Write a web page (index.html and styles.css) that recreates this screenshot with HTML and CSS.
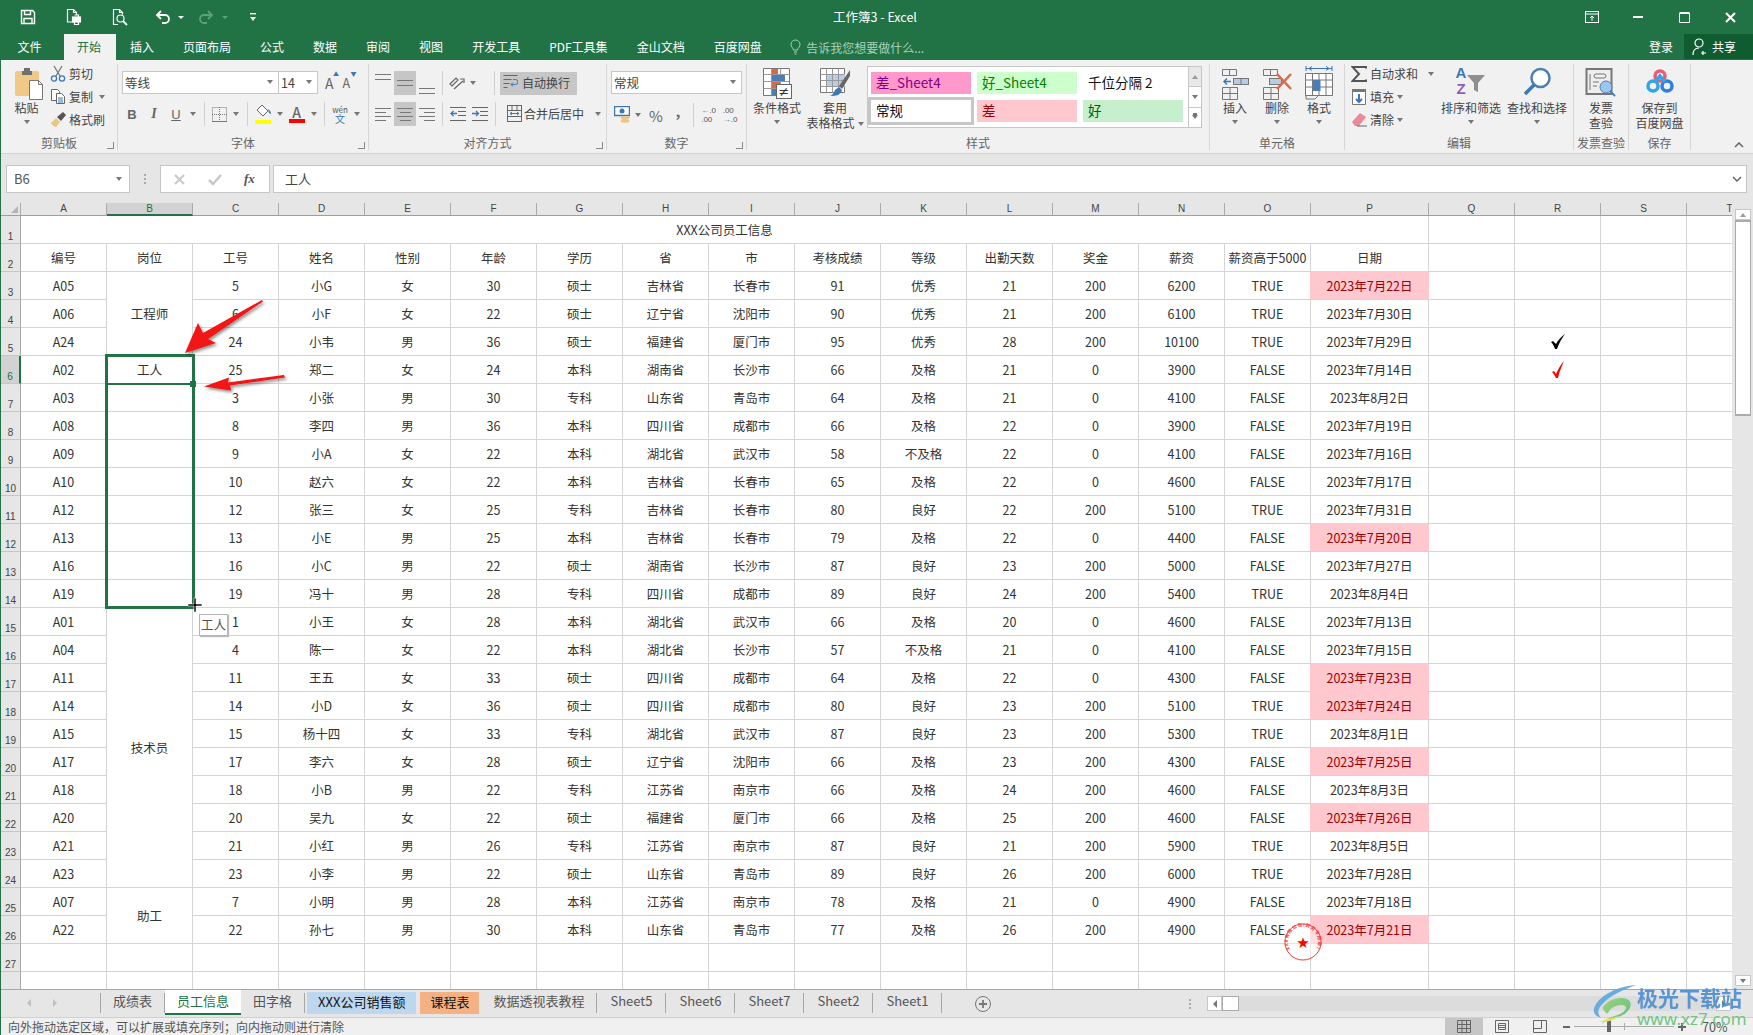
FILE: index.html
```html
<!DOCTYPE html>
<html lang="zh-CN">
<head>
<meta charset="utf-8">
<title>工作簿3 - Excel</title>
<link rel="stylesheet" href="styles.css">
</head>
<body>
<div class="app">

<header class="titlebar">
  <div class="qat">
    <svg class="qi q-save" width="16" height="16" viewBox="0 0 16 16" fill="none" stroke="#fff" stroke-width="1.4"><path d="M1.5 1.5h11l2 2v11h-13z"/><path d="M4.5 1.5v4h6v-4M4 14.5v-5h8v5"/></svg>
    <svg class="qi q-print" width="18" height="18" viewBox="0 0 18 18" fill="none" stroke="#fff" stroke-width="1.2"><path d="M8 14H2.5V1.5h6l3 3V7"/><path d="M8.5 1.5v3h3"/><rect x="7.5" y="9" width="8" height="5" fill="#fff"/><path d="M9.5 7h4v2M9.5 14v2.5h4V14" /></svg>
    <svg class="qi q-prev" width="18" height="18" viewBox="0 0 18 18" fill="none" stroke="#fff" stroke-width="1.2"><path d="M7 16.5H2.5V1.5h6l3 3v2"/><path d="M8.5 1.5v3h3"/><circle cx="9.5" cy="10.5" r="3.5"/><path d="M12 13l4 4" stroke-width="1.8"/></svg>
    <svg class="qi q-undo" width="16" height="16" viewBox="0 0 16 16" fill="none" stroke="#fff" stroke-width="1.8"><path d="M2 6h8a4 4 0 0 1 0 8H7"/><path d="M6 2L2 6l4 4"/></svg>
    <i class="qcaret"></i>
    <svg class="qi q-redo" width="16" height="16" viewBox="0 0 16 16" fill="none" stroke="#5f9f7d" stroke-width="1.8"><path d="M14 6H6a4 4 0 0 0 0 8h3"/><path d="M10 2l4 4-4 4"/></svg>
    <i class="qcaret dim"></i>
    <svg class="qi q-custom" width="8" height="10" viewBox="0 0 8 10" fill="#fff"><rect x="1" y="1" width="6" height="1.4"/><path d="M1 5h6L4 9z"/></svg>
  </div>
  <div class="doc-title">工作簿3 - Excel</div>
  <div class="winbtns">
    <svg class="wb" width="14" height="12" viewBox="0 0 14 12" fill="none" stroke="#fff"><rect x=".5" y=".5" width="13" height="11"/><path d="M.5 3h13"/><path d="M7 10V5M5 7l2-2 2 2"/></svg>
    <svg class="wb" width="10" height="2" viewBox="0 0 10 2"><rect width="10" height="2" fill="#fff"/></svg>
    <svg class="wb" width="11" height="11" viewBox="0 0 11 11" fill="none" stroke="#fff"><path d="M.5 1.5h10v9H.5z"/><path d="M.5 1h10" stroke-width="2"/></svg>
    <svg class="wb" width="11" height="11" viewBox="0 0 11 11" stroke="#fff" stroke-width="2"><path d="M1 1l9 9M10 1l-9 9"/></svg>
  </div>
</header>

<nav class="tabsbar">
  <span class="rtab">文件</span>
  <span class="rtab active">开始</span>
  <span class="rtab">插入</span>
  <span class="rtab">页面布局</span>
  <span class="rtab">公式</span>
  <span class="rtab">数据</span>
  <span class="rtab">审阅</span>
  <span class="rtab">视图</span>
  <span class="rtab">开发工具</span>
  <span class="rtab">PDF工具集</span>
  <span class="rtab">金山文档</span>
  <span class="rtab">百度网盘</span>
  <span class="tellme">
    <svg width="11" height="16" viewBox="0 0 11 16" fill="none" stroke="#a9d0b9"><path d="M3.5 11C3 8.5 1 8 1 5.5a4.5 4.5 0 0 1 9 0C10 8 8 8.5 7.5 11z"/><path d="M4 13h3M4.5 15h2"/></svg>
    告诉我您想要做什么...
  </span>
  <span class="login">登录</span>
  <span class="share">
    <svg width="16" height="18" viewBox="0 0 16 18" fill="none" stroke="#fff" stroke-width="1.2"><circle cx="7" cy="5" r="4"/><path d="M1 17c0-4 2-7 6-7M11 13v4M9 15h5"/></svg>
    共享
  </span>
</nav>

<section class="ribbon">

  <div class="group g-clip">
    <div class="gbody">
      <div class="big paste">
        <svg class="big-icon" width="32" height="34" viewBox="0 0 32 34"><rect x="1" y="5" width="24" height="25" rx="2" fill="#f0c987"/><path d="M8 5h10v4H8zM10 2h6v4h-6z" fill="#6f6f6f"/><path d="M15.5 14.5h9l4 4v15h-13z" fill="#fff" stroke="#777"/><path d="M24.5 14.5v4h4" fill="none" stroke="#777"/></svg>
        <span class="big-text">粘贴</span>
        <i class="dd"></i>
      </div>
      <div class="small-stack">
        <div class="small"><svg width="16" height="17" viewBox="0 0 16 17" fill="none"><path d="M4 1l6 10M12 1L6 11" stroke="#777" stroke-width="1.3"/><circle cx="4" cy="13.5" r="2.6" stroke="#3c78b4" stroke-width="1.3"/><circle cx="12" cy="13.5" r="2.6" stroke="#3c78b4" stroke-width="1.3"/></svg><span>剪切</span></div>
        <div class="small"><svg width="16" height="17" viewBox="0 0 16 17" fill="#fff" stroke="#666"><path d="M1.5 1.5h6l2 2v9h-8z"/><path d="M6.5 5.5h5l3 3v7h-8z"/><path d="M8 10h5M8 12h5M8 14h5" stroke="#3c78b4"/></svg><span>复制</span><i class="dd dd-copy"></i></div>
        <div class="small"><svg width="16" height="16" viewBox="0 0 16 16"><path d="M1 11l5-5 4 4-4 5c-2 0-4-2-5-4z" fill="#edc586"/><path d="M7 5l6-5 3 3-5 6z" fill="#555"/></svg><span>格式刷</span></div>
      </div>
    </div>
    <div class="glabel">剪贴板<i class="launch"></i></div>
  </div>

  <div class="group g-font">
    <div class="gbody stack">
      <div class="font-r1">
        <div class="combo c-font">等线<i class="dd"></i></div>
        <div class="combo c-size">14<i class="dd"></i></div>
        <span class="grow">A<sup>▲</sup></span>
        <span class="shrink">A<sup>▼</sup></span>
      </div>
      <div class="font-r2">
        <b class="fmt">B</b>
        <i class="fmt ital">I</i>
        <u class="fmt">U</u>
        <i class="dd"></i>
        <i class="vsep"></i>
        <svg class="ico" width="15" height="15" viewBox="0 0 15 15" fill="none" stroke="#777" stroke-dasharray="1 1"><rect x=".5" y=".5" width="14" height="14"/><path d="M7.500 0v15M0 7.500h15"/><path d="M0 14.500h15" stroke-dasharray="none"/></svg>
        <i class="dd"></i>
        <i class="vsep"></i>
        <svg class="ico" width="17" height="20" viewBox="0 0 17 20"><path d="M7 1l6 6-5 5-6-6z" fill="#fff" stroke="#666"/><path d="M13 5c2 1 3 3 3 5l-2-1z" fill="#3c78b4"/><rect x="0" y="16" width="16" height="4" fill="#ffff00"/></svg>
        <i class="dd"></i>
        <span class="fontcolor">A</span>
        <i class="dd"></i>
        <i class="vsep"></i>
        <span class="wen">wén<em>文</em></span>
        <i class="dd"></i>
      </div>
    </div>
    <div class="glabel">字体<i class="launch"></i></div>
  </div>

  <div class="group g-align">
    <div class="gbody stack">
      <div class="align-r1">
        <span class="lines at-top"><i></i><i></i><i></i></span>
        <span class="lines at-mid on"><i></i><i></i><i></i></span>
        <span class="lines at-bot"><i></i><i></i><i></i></span>
        <i class="vsep"></i>
        <svg class="ico" width="16" height="16" viewBox="0 0 16 16" fill="none" stroke="#666" stroke-width="1.2"><path d="M1 9l6-6 2 2-6 6zM5 14l9-8M11 4h4v4"/></svg>
        <i class="dd"></i>
        <i class="vsep wrap-sep"></i>
        <span class="wrap on">
          <svg width="15" height="17" viewBox="0 0 15 17" fill="none" stroke="#666"><path d="M.5 1.500h14M.5 5.500h8M.5 9.500h6M.5 13.500h4"/><path d="M10 5.500h2.500a2 2 0 0 1 0 5H8M10 8.500l-2 2 2 2" stroke="#3c78b4"/></svg>自动换行
        </span>
      </div>
      <div class="align-r2">
        <span class="lines al-left"><i></i><i></i><i></i><i></i></span>
        <span class="lines al-center on"><i></i><i></i><i></i><i></i></span>
        <span class="lines al-right"><i></i><i></i><i></i><i></i></span>
        <i class="vsep"></i>
        <svg class="ico" width="16" height="14" viewBox="0 0 16 14" fill="none" stroke="#666"><path d="M0 .5h16M8 4.500h8M8 8.500h8M0 13.500h16"/><path d="M7 6.500H1M3.500 4l-2.500 2.500L3.500 9" stroke="#3c78b4" stroke-width="1.3"/></svg>
        <svg class="ico" width="16" height="14" viewBox="0 0 16 14" fill="none" stroke="#666"><path d="M0 .5h16M8 4.500h8M8 8.500h8M0 13.500h16"/><path d="M0 6.500h6M4 4l2.500 2.500L4 9" stroke="#3c78b4" stroke-width="1.3"/></svg>
        <i class="vsep"></i>
        <span class="merge">
          <svg width="15" height="17" viewBox="0 0 15 17" fill="none" stroke="#666"><rect x=".5" y=".5" width="14" height="16"/><path d="M.5 5.500h14M.5 11.500h14M5 .5v5M10 .5v5"/><path d="M3 8.500h9M5 7l-2 1.500L5 10M10 7l2 1.500L10 10" stroke="#3c78b4"/></svg>合并后居中<i class="dd"></i>
        </span>
      </div>
    </div>
    <div class="glabel">对齐方式<i class="launch"></i></div>
  </div>

  <div class="group g-num">
    <div class="gbody stack">
      <div class="combo c-num">常规<i class="dd"></i></div>
      <div class="num-r2">
        <svg class="ico" width="16" height="18" viewBox="0 0 16 18"><rect x=".5" y=".5" width="15" height="9" fill="#fff" stroke="#3c78b4" stroke-width="1.500"/><circle cx="8" cy="5" r="2.500" fill="#3c78b4"/><ellipse cx="11" cy="12" rx="4.500" ry="1.800" fill="#edc586"/><ellipse cx="11" cy="15" rx="4.500" ry="1.800" fill="#edc586"/></svg>
        <i class="dd"></i>
        <span class="pct">%</span>
        <span class="comma">,</span>
        <i class="vsep"></i>
        <span class="dec"><em>←</em>.0<br>.00</span>
        <span class="dec">.00<br><em>→</em>.0</span>
      </div>
    </div>
    <div class="glabel">数字<i class="launch"></i></div>
  </div>

  <div class="group g-style">
    <div class="gbody">
      <div class="big b58">
        <svg class="big-icon" width="30" height="34" viewBox="0 0 30 34"><path d="M1.500 2.500h26v27h-26z" fill="#fff" stroke="#777"/><path d="M1.500 8.500h26M1.500 15.500h26M1.500 22.500h26M9.500 2.500v27M18.500 2.500v27" stroke="#999" fill="none"/><rect x="10" y="3" width="6" height="5" fill="#d9694a"/><rect x="10" y="9" width="13" height="6" fill="#4a7fb5"/><rect x="10" y="16" width="8" height="6" fill="#d9694a"/><rect x="10" y="23" width="4" height="6" fill="#4a7fb5"/><rect x="14.500" y="18.500" width="15" height="14" fill="#fff" stroke="#666"/><text x="22" y="30" class="neq">≠</text></svg>
        <span class="big-text">条件格式</span>
        <i class="dd"></i>
      </div>
      <div class="big b58">
        <svg class="big-icon" width="32" height="34" viewBox="0 0 32 34"><path d="M1.500 2.500h24v24h-24z" fill="#fff" stroke="#777"/><rect x="7" y="8" width="19" height="13" fill="#b7cde6"/><path d="M1.500 8.500h24M1.500 14.500h24M1.500 20.500h24M7.500 2.500v24M13.500 2.500v24M19.500 2.500v24" stroke="#999" fill="none"/><path d="M31 4L20 20l3 3L31 10z" fill="#666"/><path d="M20 21l3 3c-1 5-6 6-12 6 3-1 4-4 5-6z" fill="#3c78b4"/></svg>
        <span class="big-text">套用<br>表格格式<i class="dd inline"></i></span>
      </div>
      <div class="gallery">
        <div class="gal-grid">
          <span class="st s-bad4">差_Sheet4</span>
          <span class="st s-good4">好_Sheet4</span>
          <span class="st s-plain">千位分隔 2</span>
          <span class="st s-normal">常规</span>
          <span class="st s-bad">差</span>
          <span class="st s-good">好</span>
        </div>
        <div class="gal-scroll">
          <span class="gs gs1"><i class="up"></i></span>
          <span class="gs gs2"><i class="dd"></i></span>
          <span class="gs gs3"><i class="dd bar"></i></span>
        </div>
      </div>
    </div>
    <div class="glabel">样式</div>
  </div>

  <div class="group g-cells">
    <div class="gbody">
      <div class="big b42">
        <svg class="big-icon" width="28" height="34" viewBox="0 0 28 34" fill="none" stroke="#777"><path d="M1.500 3.500h14v6h-14zM8.500 3.500v6M1.500 21.500h15v12h-15zM9 21.500v12M1.500 27.500h15"/><rect x="12.500" y="12.500" width="15" height="6" fill="#b7cde6" stroke="#777"/><path d="M20 12.500v6"/><path d="M10 15.500H3M6 12.500l-3 3 3 3" stroke="#3c78b4" stroke-width="1.500"/></svg>
        <span class="big-text">插入</span><i class="dd"></i>
      </div>
      <div class="big b42">
        <svg class="big-icon" width="30" height="34" viewBox="0 0 30 34" fill="none" stroke="#777"><path d="M1.500 3.500h14v6h-14zM8.500 3.500v6M1.500 21.500h15v12h-15zM9 21.500v12M1.500 27.500h15"/><rect x="7.500" y="12.500" width="12" height="6" fill="#b7cde6"/><path d="M15 8l14 15M29 8L15 23" stroke="#d9694a" stroke-width="2.500"/></svg>
        <span class="big-text">删除</span><i class="dd"></i>
      </div>
      <div class="big b42">
        <svg class="big-icon" width="28" height="34" viewBox="0 0 28 34" fill="none" stroke="#777"><path d="M1 2.500h26M1 0v5M27 0v5M4 2.500l3-2M4 2.500l3 2M24 2.500l-3-2M24 2.500l-3 2" stroke="#3c78b4"/><path d="M.5 7.500h27v22H.5z" fill="#fff"/><path d="M.5 14h27M.5 21h27M7.500 7.500v22M14 7.500v22M21 7.500v22"/><rect x="8" y="14" width="7.500" height="11" fill="#4a7fb5" stroke="none"/><path d="M1 29v4h9l3-3" /></svg>
        <span class="big-text">格式</span><i class="dd"></i>
      </div>
    </div>
    <div class="glabel">单元格</div>
  </div>

  <div class="group g-edit">
    <div class="gbody">
      <div class="small-stack">
        <div class="small"><svg width="16" height="16" viewBox="0 0 16 16" fill="none" stroke="#555" stroke-width="2"><path d="M15 2.500V1H1.500L8 8l-6.500 7H15v-1.500"/></svg><span>自动求和</span><i class="dd dd-sum"></i></div>
        <div class="small"><svg width="16" height="17" viewBox="0 0 16 17"><path d="M1.500 1.500h13v15h-13z" fill="#fff" stroke="#777"/><rect x="1" y="1" width="14" height="3" fill="#777"/><path d="M8 6v8M5 11l3 3 3-3" fill="none" stroke="#3c78b4" stroke-width="2"/></svg><span>填充</span><i class="dd"></i></div>
        <div class="small"><svg width="16" height="15" viewBox="0 0 16 15"><path d="M1 10l8-9 6 4-7 9H4z" fill="#e88b97"/><path d="M6 14h10" stroke="#666" fill="none"/></svg><span>清除</span><i class="dd"></i></div>
      </div>
      <div class="big b66">
        <svg class="big-icon" width="32" height="34" viewBox="0 0 32 34"><text x="6" y="12" class="az a">A</text><text x="6" y="28" class="az z">Z</text><path d="M12 9h18l-7 8v9l-4-2v-7z" fill="#8f8f8f"/></svg>
        <span class="big-text">排序和筛选</span><i class="dd"></i>
      </div>
      <div class="big b66">
        <svg class="big-icon" width="30" height="34" viewBox="0 0 30 34" fill="none"><circle cx="18.500" cy="12" r="9" fill="#fff" stroke="#4a7fb5" stroke-width="2.500"/><path d="M12 19L3 28" stroke="#3c78b4" stroke-width="3.500"/></svg>
        <span class="big-text">查找和选择</span><i class="dd"></i>
      </div>
    </div>
    <div class="glabel">编辑</div>
  </div>

  <div class="group g-inv">
    <div class="gbody">
      <div class="big b55">
        <svg class="big-icon" width="32" height="34" viewBox="0 0 32 34" fill="none"><rect x="1.500" y="3" width="25" height="25" fill="#eee" stroke="#777" stroke-width="2"/><rect x="9" y="8" width="12" height="4" rx="2" stroke="#777"/><path d="M5 8v16M8 16h6M8 20h4" stroke="#777"/><circle cx="21" cy="21" r="6" fill="#9cc6ef" stroke="#4a7fb5"/><path d="M25 25l5 5" stroke="#4a7fb5" stroke-width="2"/></svg>
        <span class="big-text">发票<br>查验</span>
      </div>
    </div>
    <div class="glabel">发票查验</div>
  </div>

  <div class="group g-save">
    <div class="gbody">
      <div class="big b62">
        <svg class="big-icon" width="30" height="34" viewBox="0 0 30 34" fill="none" stroke-width="3.500"><circle cx="8" cy="20" r="5" stroke="#2fa6e8"/><circle cx="22" cy="20" r="5" stroke="#2f7fe0"/><circle cx="15" cy="10" r="5" stroke="#ef5a6f"/><path d="M10 16l5-6 5 6" stroke="#2fa6e8"/></svg>
        <span class="big-text">保存到<br>百度网盘</span>
      </div>
    </div>
    <div class="glabel">保存</div>
  </div>

  <svg class="collapse" width="10" height="6" viewBox="0 0 10 6" fill="none" stroke="#666" stroke-width="1.500"><path d="M1 5l4-4 4 4"/></svg>
</section>

<section class="formula">
  <div class="namebox">B6<i class="dd"></i></div>
  <span class="grip"></span>
  <div class="fxbox">
    <svg width="13" height="13" viewBox="0 0 13 13" stroke="#c8c8c8" stroke-width="2"><path d="M2 2l9 9M11 2l-9 9"/></svg>
    <svg width="14" height="13" viewBox="0 0 14 13" fill="none" stroke="#c8c8c8" stroke-width="2.500"><path d="M1 7l4 4 8-9"/></svg>
    <span class="fx">fx</span>
  </div>
  <div class="fxinput">工人<svg class="fxchev" width="10" height="6" viewBox="0 0 10 6" fill="none" stroke="#666" stroke-width="1.500"><path d="M1 1l4 4 4-4"/></svg></div>
</section>

<section class="sheet">
  <div class="canvas">
    <table class="grid">
      <colgroup><col class="c-h"><col class="c-n"><col class="c-n"><col class="c-n"><col class="c-n"><col class="c-n"><col class="c-n"><col class="c-n"><col class="c-n"><col class="c-n"><col class="c-n"><col class="c-n"><col class="c-n"><col class="c-n"><col class="c-n"><col class="c-n"><col class="c-p"><col class="c-n"><col class="c-n"><col class="c-n"><col class="c-n"></colgroup>
      <thead><tr><th class="corner"><i></i></th><th>A</th><th class="sel-h">B</th><th>C</th><th>D</th><th>E</th><th>F</th><th>G</th><th>H</th><th>I</th><th>J</th><th>K</th><th>L</th><th>M</th><th>N</th><th>O</th><th>P</th><th>Q</th><th>R</th><th>S</th><th>T</th></tr></thead>
      <tbody>
<tr><th>1<td colspan="16">XXX公司员工信息<td><td><td><td>
<tr><th>2<td>编号<td>岗位<td>工号<td>姓名<td>性别<td>年龄<td>学历<td>省<td>市<td>考核成绩<td>等级<td>出勤天数<td>奖金<td>薪资<td>薪资高于5000<td>日期<td><td><td><td>
<tr><th>3<td>A05<td rowspan="3">工程师<td>5<td>小G<td>女<td>30<td>硕士<td>吉林省<td>长春市<td>91<td>优秀<td>21<td>200<td>6200<td>TRUE<td class="pink">2023年7月22日<td><td><td><td>
<tr><th>4<td>A06<td>6<td>小F<td>女<td>22<td>硕士<td>辽宁省<td>沈阳市<td>90<td>优秀<td>21<td>200<td>6100<td>TRUE<td>2023年7月30日<td><td><td><td>
<tr><th>5<td>A24<td>24<td>小韦<td>男<td>36<td>硕士<td>福建省<td>厦门市<td>95<td>优秀<td>28<td>200<td>10100<td>TRUE<td>2023年7月29日<td><td><svg class="tick" width="16" height="15" viewBox="0 0 16 15"><path d="M1 8l2-1 3 3C8 6 11 3 15 0c-3 4-6 9-8 15H5C4 12 3 10 1 8z" fill="#000"/></svg><td><td>
<tr><th class="sel-r">6<td>A02<td>工人<td>25<td>郑二<td>女<td>24<td>本科<td>湖南省<td>长沙市<td>66<td>及格<td>21<td>0<td>3900<td>FALSE<td>2023年7月14日<td><td><svg class="tick" width="12" height="17" viewBox="0 0 12 17"><path d="M0 11l2-1 2 3c2-4 4-9 8-13-2 5-5 11-6 17H4C3 15 2 13 0 11z" fill="#f00"/></svg><td><td>
<tr><th>7<td>A03<td><td>3<td>小张<td>男<td>30<td>专科<td>山东省<td>青岛市<td>64<td>及格<td>21<td>0<td>4100<td>FALSE<td>2023年8月2日<td><td><td><td>
<tr><th>8<td>A08<td><td>8<td>李四<td>男<td>36<td>本科<td>四川省<td>成都市<td>66<td>及格<td>22<td>0<td>3900<td>FALSE<td>2023年7月19日<td><td><td><td>
<tr><th>9<td>A09<td><td>9<td>小A<td>女<td>22<td>本科<td>湖北省<td>武汉市<td>58<td>不及格<td>22<td>0<td>4100<td>FALSE<td>2023年7月16日<td><td><td><td>
<tr><th>10<td>A10<td><td>10<td>赵六<td>女<td>22<td>本科<td>吉林省<td>长春市<td>65<td>及格<td>22<td>0<td>4600<td>FALSE<td>2023年7月17日<td><td><td><td>
<tr><th>11<td>A12<td><td>12<td>张三<td>女<td>25<td>专科<td>吉林省<td>长春市<td>80<td>良好<td>22<td>200<td>5100<td>TRUE<td>2023年7月31日<td><td><td><td>
<tr><th>12<td>A13<td><td>13<td>小E<td>男<td>25<td>本科<td>吉林省<td>长春市<td>79<td>及格<td>22<td>0<td>4400<td>FALSE<td class="pink">2023年7月20日<td><td><td><td>
<tr><th>13<td>A16<td><td>16<td>小C<td>男<td>22<td>硕士<td>湖南省<td>长沙市<td>87<td>良好<td>23<td>200<td>5000<td>FALSE<td>2023年7月27日<td><td><td><td>
<tr><th>14<td>A19<td><td>19<td>冯十<td>男<td>28<td>专科<td>四川省<td>成都市<td>89<td>良好<td>24<td>200<td>5400<td>TRUE<td>2023年8月4日<td><td><td><td>
<tr><th>15<td>A01<td rowspan="10">技术员<td>1<td>小王<td>女<td>28<td>本科<td>湖北省<td>武汉市<td>66<td>及格<td>20<td>0<td>4600<td>FALSE<td>2023年7月13日<td><td><td><td>
<tr><th>16<td>A04<td>4<td>陈一<td>女<td>22<td>本科<td>湖北省<td>长沙市<td>57<td>不及格<td>21<td>0<td>4100<td>FALSE<td>2023年7月15日<td><td><td><td>
<tr><th>17<td>A11<td>11<td>王五<td>女<td>33<td>硕士<td>四川省<td>成都市<td>64<td>及格<td>22<td>0<td>4300<td>FALSE<td class="pink">2023年7月23日<td><td><td><td>
<tr><th>18<td>A14<td>14<td>小D<td>女<td>36<td>硕士<td>四川省<td>成都市<td>80<td>良好<td>23<td>200<td>5100<td>TRUE<td class="pink">2023年7月24日<td><td><td><td>
<tr><th>19<td>A15<td>15<td>杨十四<td>女<td>33<td>专科<td>湖北省<td>武汉市<td>87<td>良好<td>23<td>200<td>5300<td>TRUE<td>2023年8月1日<td><td><td><td>
<tr><th>20<td>A17<td>17<td>李六<td>女<td>28<td>硕士<td>辽宁省<td>沈阳市<td>66<td>及格<td>23<td>200<td>4300<td>FALSE<td class="pink">2023年7月25日<td><td><td><td>
<tr><th>21<td>A18<td>18<td>小B<td>男<td>22<td>专科<td>江苏省<td>南京市<td>66<td>及格<td>24<td>200<td>4600<td>FALSE<td>2023年8月3日<td><td><td><td>
<tr><th>22<td>A20<td>20<td>吴九<td>女<td>22<td>硕士<td>福建省<td>厦门市<td>66<td>及格<td>25<td>200<td>4600<td>FALSE<td class="pink">2023年7月26日<td><td><td><td>
<tr><th>23<td>A21<td>21<td>小红<td>男<td>26<td>专科<td>江苏省<td>南京市<td>87<td>良好<td>21<td>200<td>5900<td>TRUE<td>2023年8月5日<td><td><td><td>
<tr><th>24<td>A23<td>23<td>小李<td>男<td>22<td>硕士<td>山东省<td>青岛市<td>89<td>良好<td>26<td>200<td>6000<td>TRUE<td>2023年7月28日<td><td><td><td>
<tr><th>25<td>A07<td rowspan="2">助工<td>7<td>小明<td>男<td>28<td>本科<td>江苏省<td>南京市<td>78<td>及格<td>21<td>0<td>4900<td>FALSE<td>2023年7月18日<td><td><td><td>
<tr><th>26<td>A22<td>22<td>孙七<td>男<td>30<td>本科<td>山东省<td>青岛市<td>77<td>及格<td>26<td>200<td>4900<td>FALSE<td class="pink">2023年7月21日<td><td><td><td>
<tr><th>27<td><td><td><td><td><td><td><td><td><td><td><td><td><td><td><td><td><td><td><td>
<tr><th><td><td><td><td><td><td><td><td><td><td><td><td><td><td><td><td><td><td><td><td>
      </tbody>
    </table>
    <div class="sel-range"></div>
    <div class="sel-active"></div>
    <div class="sel-handle"></div>
    <div class="fill-tip">工人</div>
    <svg class="overlay" width="300" height="440" viewBox="0 0 300 440">
      <defs><filter id="sh" x="-20%" y="-20%" width="150%" height="150%"><feDropShadow dx="1.500" dy="2" stdDeviation="1.500" flood-color="#000" flood-opacity=".45"/></filter></defs>
      <path d="M261 97l1 1.500L207 136l8 4-31 10 13-30 5 10z" fill="#f21212" filter="url(#sh)"/>
      <path d="M283 172l1 2.500-55 8 1 5-27-4 25-9-1 5z" fill="#f21212" filter="url(#sh)"/>
      <path d="M187 401h6v-6h2v6h6v2h-6v6h-2v-6h-6z" fill="#000" stroke="#fff" stroke-width=".6"/>
    </svg>
    <svg class="stamp" width="40" height="40" viewBox="0 0 40 40">
      <defs><path id="ring" d="M7 27a15 15 0 1 1 26 0"/></defs>
      <circle cx="20" cy="20" r="18" fill="rgba(255,255,255,.4)" stroke="#f23b3b" stroke-width="1"/>
      <text class="stamp-text" textLength="61" lengthAdjust="spacing"><textPath href="#ring">XXX有限公司(财务专用章)</textPath></text>
      <text x="20" y="26" class="stamp-star">★</text>
    </svg>
  </div>
  <aside class="vscroll">
    <span class="vbtn"><i class="up"></i></span>
    <span class="vthumb"></span>
    <span class="vbtn vdown"><i class="dd"></i></span>
  </aside>
</section>

<section class="sheettabs">
  <div class="tabnav"><i class="navl"></i><i class="navr"></i></div>
  <span class="stab">成绩表</span>
  <span class="stab active">员工信息</span>
  <span class="stab">田字格</span>
  <span class="stab blue">XXX公司销售额</span>
  <span class="stab orange">课程表</span>
  <span class="stab">数据透视表教程</span>
  <span class="stab sn">Sheet5</span>
  <span class="stab sn">Sheet6</span>
  <span class="stab sn">Sheet7</span>
  <span class="stab sn">Sheet2</span>
  <span class="stab sn">Sheet1</span>
  <svg class="addsheet" width="16" height="16" viewBox="0 0 16 16" fill="none" stroke="#777"><circle cx="8" cy="8" r="7.500"/><path d="M8 4v8M4 8h8" stroke-width="1.800"/></svg>
  <span class="grip tabgrip"></span>
  <div class="hscroll">
    <span class="hbtn"><i class="navl dark"></i></span>
    <span class="hthumb"></span>
    <span class="htrack"></span>
    <span class="hbtn"><i class="navr dark"></i></span>
  </div>
</section>

<footer class="status">
  <span class="status-text">向外拖动选定区域，可以扩展或填充序列；向内拖动则进行清除</span>
  <span class="view on"><svg width="14" height="13" viewBox="0 0 14 13" fill="none" stroke="#666"><path d="M.5.500h13v12H.5zM.5 4.500h13M.5 8.500h13M5 .5v12M9.500.500v12"/></svg></span>
  <span class="view"><svg width="14" height="13" viewBox="0 0 14 13" fill="none" stroke="#666"><path d="M.5.500h13v12H.5z"/><path d="M3.500 3.500h7v6h-7zM3.500 5.500h7M3.500 7.500h7"/></svg></span>
  <span class="view"><svg width="14" height="13" viewBox="0 0 14 13" fill="none" stroke="#666"><path d="M.5.500h13v12H.5zM.5 8.500h8M8.500.5v8"/></svg></span>
  <i class="zminus"></i>
  <span class="zslider"><i class="ztick"></i><i class="zthumb"></i></span>
  <i class="zplus"></i>
  <span class="zoomval">70%</span>
</footer>

<div class="watermark">
  <svg class="wm-logo" width="44" height="41" viewBox="0 0 46 41">
    <defs><linearGradient id="wg" x1="0" y1="0" x2="1" y2="1"><stop offset="0" stop-color="#9fd27c"/><stop offset="1" stop-color="#4fbf72"/></linearGradient></defs>
    <path d="M45 0C28 1 9 9 2 22c-3 6 0 11 6 12-4-4-3-10 3-15C19 10 32 5 45 0z" fill="#5aa6e0" opacity=".9"/>
    <path d="M10 24c4-8 17-13 26-9 6 3 4 12-6 17-8 4-15 4-21 9 5-8 17-8 23-13 4-4 3-7-2-7-6 0-12 3-14 8-1 2-4 0-6-5z" fill="url(#wg)" opacity=".95"/>
    <path d="M6 39c8-4 16-4 22-7-5 5-13 7-22 7z" fill="#f0e060"/>
  </svg>
  <div class="wm-text"><b>极光下载站</b><span>www.xz7.com</span></div>
</div>

</div>
</body>
</html>
```
FILE: styles.css
```css
* { box-sizing: border-box; }
html, body { margin: 0; height: 100%; overflow: hidden; }
body { font-family: "Noto Sans CJK SC", "Noto Sans", sans-serif; font-size: 12px; color: #444; }
i, em { font-style: normal; }

.app { position: relative; height: 1035px; width: 1753px; border-left: 1px solid #217346; display: flex; flex-direction: column; overflow: hidden; background: #e6e6e6; }

/* carets */
.dd { display: inline-block; width: 0; height: 0; border-left: 3px solid transparent; border-right: 3px solid transparent; border-top: 4px solid #777; }

/* title bar */
.titlebar { height: 34px; background: #217346; margin-left: -1px; display: flex; align-items: center; position: relative; color: #fff; flex: none; }
.qat { display: flex; align-items: center; padding-left: 20px; }
.q-print { margin-left: 29px; }
.q-prev { margin-left: 28px; }
.q-undo { margin-left: 26px; }
.qcaret { width: 0; height: 0; border-left: 3px solid transparent; border-right: 3px solid transparent; border-top: 3px solid #fff; margin-left: 7px; }
.qcaret.dim { border-top-color: #5f9f7d; }
.q-redo { margin-left: 14px; }
.qcaret.dim { margin-left: 8px; }
.q-custom { margin-left: 21px; }
.doc-title { position: absolute; left: 833px; top: 8px; font-size: 12.5px; line-height: 18px; }
.winbtns { margin-left: auto; width: 184px; display: grid; grid-template-columns: 46px 46px 47px 45px; justify-items: center; align-items: center; padding-right: 0; }

/* ribbon tabs */
.tabsbar { height: 26px; background: #217346; margin-left: -1px; display: flex; align-items: stretch; padding-left: 3px; color: #fff; flex: none; }
.rtab { padding: 0 14.5px; line-height: 25px; font-size: 12px; white-space: nowrap; }
.rtab.active { background: #f1f1f1; color: #217346; padding: 0 14.5px 0 13px; margin-left: 8px; }
.tellme { display: flex; align-items: center; gap: 5px; color: #a9d0b9; margin-left: 14px; font-size: 12px; }
.login { margin-left: auto; line-height: 26px; margin-right: 11px; }
.share { width: 69px; background: #0f5c30; display: flex; align-items: center; gap: 4px; padding-left: 8px; height: 25px; }

/* ribbon */
.ribbon { height: 94px; background: #f1f1f1; display: flex; position: relative; border-bottom: 1px solid #d2d2d2; flex: none; }
.group { height: 86px; margin-top: 4px; border-right: 1px solid #d6d6d6; display: flex; flex-direction: column; position: relative; flex: none; }
.gbody { height: 70px; display: flex; }
.gbody.stack { flex-direction: column; }
.glabel { height: 16px; line-height: 18px; text-align: center; color: #666; font-size: 12px; white-space: nowrap; }
.launch { position: absolute; right: 3px; bottom: 1px; width: 7px; height: 7px; border-left: 1px solid #888; border-bottom: 1px solid #888; transform: scaleX(-1); }
.g-clip { width: 117px; } .g-font { width: 251px; } .g-align { width: 238px; } .g-num { width: 140px; } .g-style { width: 463px; }
.g-cells { width: 135px; } .g-edit { width: 229px; } .g-inv { width: 55px; } .g-save { width: 62px; }

.big { display: flex; flex-direction: column; align-items: center; padding-top: 2px; flex: none; }
.big-icon { height: 34px; flex: none; }
.big-text { line-height: 15px; white-space: nowrap; text-align: center; }
.big > .dd { margin-top: 5px; }
.dd.inline { margin-left: 3px; vertical-align: 2px; }
.paste { width: 49px; padding-left: 2px; }
.paste .big-icon { margin-left: 6px; }
.b58 { width: 58px; } .b42 { width: 42px; } .b66 { width: 66px; } .b55 { width: 54px; } .b62 { width: 61px; }
.small-stack { margin-top: -2px; display: flex; flex-direction: column; }
.small { height: 23px; display: flex; align-items: center; gap: 3px; white-space: nowrap; }
.dd-copy { margin-left: 3px; }
.dd-sum { margin-left: 7px; }

.combo { height: 23px; background: #fff; border: 1px solid #c6c6c6; display: flex; align-items: center; justify-content: space-between; padding: 0 5px 1px 2px; font-size: 12.5px; }
.vsep { width: 1px; height: 24px; background: #d0d0d0; justify-self: center; }
.ico { justify-self: center; align-self: center; }

/* font */
.g-font .stack { padding: 7px 0 0 4px; }
.font-r1 { display: flex; align-items: center; }
.c-font { width: 157px; }
.c-size { width: 40px; margin-left: -1px; }
.grow, .shrink { color: #666; position: relative; font-size: 14px; line-height: 20px; }
.grow { margin-left: 7px; }
.shrink { margin-left: 9px; font-size: 12.5px; }
.grow sup, .shrink sup { position: absolute; left: 8px; top: -3px; font-size: 6px; color: #3c78b4; line-height: 8px; }
.font-r2 { display: grid; grid-template-columns: 22px 22px 22px 12px 10px 20px 13px 10px 22px 11px 23px 11px 10px 22px 11px; margin: 8px 0 0 -1px; height: 24px; align-items: center; justify-items: center; }
.fmt { font-size: 13px; color: #666; font-family: "Liberation Sans", sans-serif; }
.ital { font-style: italic; font-family: "Liberation Serif", serif; font-weight: 700; font-size: 14px; }
.fontcolor { font-size: 14px; line-height: 14px; font-weight: 500; color: #666; border-bottom: 4px solid #f00; width: 16px; text-align: center; }
.wen { font-size: 8px; line-height: 9px; text-align: center; color: #555; }
.wen em { display: block; color: #3c78b4; font-size: 10px; line-height: 10px; }

/* alignment */
.g-align .stack { padding: 7px 0 0 3px; }
.align-r1 { display: grid; grid-template-columns: 22px 22px 22px 8px 22px 10px 22px 77px; height: 23px; align-items: center; justify-items: center; }
.align-r2 { display: grid; grid-template-columns: 22px 22px 22px 9px 22px 22px 9px auto; height: 23px; margin-top: 8px; align-items: center; justify-items: center; }
.wrap-sep { justify-self: end; margin-right: 5px; }
.lines { display: flex; flex-direction: column; gap: 4px; height: 100%; width: 22px; padding: 2px 3px; }
.lines i { display: block; height: 1px; background: #777; }
.at-top { justify-content: flex-start; padding-top: 3px; }
.at-mid { justify-content: center; }
.at-bot { justify-content: flex-end; padding-bottom: 1px; }
.at-top i:nth-child(3), .at-mid i:nth-child(3), .at-bot i:nth-child(3) { display: none; }
.lines.al-left, .lines.al-center, .lines.al-right { justify-content: center; gap: 3px; }
.al-left i:nth-child(even) { width: 11px; }
.al-center i:nth-child(even) { width: 11px; align-self: center; }
.al-right i:nth-child(even) { width: 11px; align-self: flex-end; }
.on { background: #c6c6c6; }
.wrap { display: flex; align-items: center; gap: 4px; width: 77px; height: 23px; padding: 0 0 1px 3px; white-space: nowrap; }
.merge { display: flex; align-items: center; gap: 2px; padding: 0 0 1px 2px; white-space: nowrap; }
.merge .dd { margin-left: 9px; }

/* number */
.g-num .stack { padding: 7px 0 0 4px; }
.c-num { width: 131px; }
.num-r2 { display: grid; grid-template-columns: 20px 12px 24px 20px 10px 21px 22px; margin: 9px 0 0 1px; height: 24px; align-items: center; justify-items: center; }
.pct { font-size: 15px; color: #666; }
.comma { font-size: 14px; font-weight: 700; color: #666; line-height: 12px; margin-bottom: 8px; }
.dec { font-size: 8px; line-height: 9px; color: #555; font-family: "Liberation Sans", sans-serif; white-space: nowrap; }
.dec em { color: #3c78b4; font-weight: 700; }

/* styles */
.g-style .gbody { padding-top: 0; }
.g-style .b58:first-child { margin-left: 1px; }
.neq { font-size: 13px; fill: #333; text-anchor: middle; font-family: "DejaVu Sans", sans-serif; }
.gallery { margin: 2px 0 0 3px; width: 335px; height: 62px; background: #fff; border: 1px solid #c6c6c6; display: flex; justify-content: space-between; }
.gal-grid { display: grid; grid-template-columns: repeat(3, 100px); grid-template-rows: 22px 22px; gap: 6px; padding: 5px 0 0 3px; }
.st { font-size: 13.5px; line-height: 20px; padding-left: 5px; white-space: nowrap; }
.s-bad4 { background: #ff99cc; color: #800080; }
.s-good4 { background: #ccffcc; color: #008000; }
.s-plain { color: #111; }
.s-normal { color: #111; box-shadow: 0 0 0 3px #c6c6c6; }
.s-bad { background: #ffc7ce; color: #9c0006; }
.s-good { background: #c6efce; color: #006100; }
.gal-scroll { width: 13px; display: flex; flex-direction: column; border-left: 1px solid #c6c6c6; }
.gs { flex: 1; display: flex; align-items: center; justify-content: center; }
.gs + .gs { border-top: 1px solid #c6c6c6; }
.gs1 { background: #e8e8e8; }
.up { display: inline-block; width: 0; height: 0; border-left: 3px solid transparent; border-right: 3px solid transparent; border-bottom: 4px solid #9a9a9a; }
.dd.bar { box-shadow: 0 -3px 0 -1px #777; }

.g-cells .gbody { padding-left: 4px; }
.g-edit .gbody { padding-left: 6px; }
.g-edit .small-stack { width: 87px; }
.az { font-size: 15px; font-weight: 700; font-family: "Liberation Sans", sans-serif; text-anchor: middle; }
.az.a { fill: #3c78b4; }
.az.z { fill: #8e5fb5; }
.collapse { position: absolute; right: 9px; bottom: 5px; }

/* formula bar */
.formula { height: 49px; background: #e6e6e6; display: flex; align-items: flex-start; padding: 11px 6px 0 5px; flex: none; }
.namebox { width: 124px; height: 28px; background: #fff; border: 1px solid #c6c6c6; display: flex; align-items: center; justify-content: space-between; padding: 0 7px 1px; font-size: 13px; color: #555; }
.grip { width: 30px; height: 12px; margin-top: 8px; background: radial-gradient(circle, #aaa 1px, transparent 1.4px) center top / 2px 4px repeat-y; flex: none; }
.fxbox { width: 110px; height: 28px; background: #fff; border: 1px solid #c6c6c6; display: flex; align-items: center; gap: 22px; padding-left: 12px; }
.fx { font-family: "Liberation Serif", serif; font-style: italic; font-weight: 700; font-size: 13px; color: #555; }
.fxinput { flex: 1; margin-left: 3px; height: 28px; background: #fff; border: 1px solid #c6c6c6; display: flex; align-items: center; justify-content: space-between; padding: 0 4px 1px 11px; font-size: 13px; color: #444; }

/* sheet */
.sheet { height: 786px; display: flex; flex: none; overflow: hidden; }
.canvas { width: 1731px; height: 786px; position: relative; overflow: hidden; background: #fff; flex: none; }
.grid { border-collapse: separate; border-spacing: 0; table-layout: fixed; width: 1772px; font-size: 12.5px; color: #333; }
.c-h { width: 20px; } .c-n { width: 86px; } .c-p { width: 118px; }
.grid td { height: 28px; padding: 0; text-align: center; vertical-align: middle; line-height: 14px; white-space: nowrap; overflow: hidden; border-right: 1px solid #d4d4d4; border-bottom: 1px solid #d4d4d4; background: #fff; }
.grid thead th { height: 13px; padding: 0; background: #e6e6e6; font: 400 10px/12px "Liberation Sans", sans-serif; color: #444; border-right: 1px solid #ababab; border-bottom: 1px solid #9e9e9e; overflow: hidden; }
.grid thead .sel-h { background: #d2d2d2; color: #217346; border-bottom: 2px solid #217346; line-height: 11px; }
.corner { position: relative; }
.corner i { position: absolute; right: 2px; bottom: 2px; width: 0; height: 0; border-left: 7px solid transparent; border-bottom: 7px solid #b4b4b4; }
.grid tbody th { padding: 0 0 1px; background: #e6e6e6; vertical-align: bottom; font: 400 10px/11px "Liberation Sans", sans-serif; color: #444; border-right: 1px solid #a8a8a8; border-bottom: 1px solid #c6c6c6; text-align: center; }
.grid tbody .sel-r { background: #d2d2d2; color: #217346; border-right: 2px solid #217346; }
.grid td.pink { background: #ffc7ce; color: #9c0006; border-right-color: #ffc7ce; box-shadow: -1px -1px 0 #ffc7ce; }
.tick { display: block; margin: 0 auto; }

.sel-range { position: absolute; left: 104px; top: 151px; width: 90px; height: 255px; border: 3px solid #217346; pointer-events: none; }
.sel-active { position: absolute; left: 105px; top: 180px; width: 88px; height: 2px; background: #217346; }
.sel-handle { position: absolute; left: 189px; top: 178px; width: 6px; height: 6px; background: #217346; }
.fill-tip { position: absolute; left: 198px; top: 411px; width: 29px; height: 22px; background: #fff; border: 1px solid #b5b5b5; box-shadow: 1px 1px 1px #bbb; text-align: center; line-height: 20px; font-size: 12.5px; color: #555; }
.overlay { position: absolute; left: 0; top: 0; pointer-events: none; }
.stamp { position: absolute; left: 1282px; top: 719px; }
.stamp-text { font-size: 4.6px; fill: #f23b3b; font-weight: 700; }
.stamp-star { font-size: 15px; fill: #f00; text-anchor: middle; font-family: "DejaVu Sans", sans-serif; }

.vscroll { width: 21px; background: #e6e6e6; display: flex; flex-direction: column; align-items: center; padding: 6px 0 3px 1px; flex: none; }
.vbtn { width: 16px; height: 11px; background: #fff; border: 1px solid #c6c6c6; display: flex; align-items: center; justify-content: center; flex: none; }
.vthumb { width: 16px; height: 196px; background: #fff; border: 1px solid #ababab; border-width: 2px 1px; flex: none; }
.vdown { margin-top: auto; height: 11px; }

/* sheet tabs */
.sheettabs { height: 28px; background: #e6e6e6; border-top: 1px solid #a6a6a6; display: flex; align-items: flex-start; flex: none; }
.tabnav { width: 100px; height: 20px; margin-top: 3px; display: flex; align-items: center; gap: 22px; padding-left: 26px; border-right: 1px solid #a6a6a6; flex: none; }
.navl { width: 0; height: 0; border-top: 4px solid transparent; border-bottom: 4px solid transparent; border-right: 4px solid #c0c0c0; }
.navr { width: 0; height: 0; border-top: 4px solid transparent; border-bottom: 4px solid transparent; border-left: 4px solid #c0c0c0; }
.navl.dark { border-right-color: #777; }
.navr.dark { border-left-color: #777; }
.stab { height: 20px; margin-top: 3px; padding: 0 12px; font-size: 13px; line-height: 16px; color: #555; border-right: 1px solid #a6a6a6; white-space: nowrap; flex: none; }
.stab.sn { width: 69px; padding: 0; text-align: center; }
.stab.active { height: 25px; margin-top: 0; background: #fff; color: #217346; border-right: 0; border-bottom: 2px solid #217346; line-height: 21px; }
.stab.blue { height: 22px; margin: 2px 4px 0 2px; padding: 0 11px; background: #bdd7ee; color: #111; border-right: 0; line-height: 19px; }
.stab.orange { height: 22px; margin: 2px 2px 0 0; padding: 0 10px; background: #f4b183; color: #111; border-right: 0; line-height: 19px; }
.addsheet { margin: 6px 0 0 33px; flex: none; }
.tabgrip { margin: 8px 0 0 197px; width: 4px; }
.hscroll { margin-left: 15px; width: 524px; height: 15px; margin-top: 6px; background: #dcdcdc; display: flex; flex: none; }
.hbtn { width: 15px; height: 15px; background: #fff; border: 1px solid #c6c6c6; display: flex; align-items: center; justify-content: center; flex: none; }
.hthumb { width: 17px; background: #fff; border: 1px solid #ababab; flex: none; }
.htrack { flex: 1; }

/* status bar */
.status { height: 18px; background: #f0f0f0; display: flex; align-items: center; font-size: 12px; color: #555; flex: none; border-top: 1px solid #d0d0d0; }
.status-text { padding-left: 7px; width: 1444px; white-space: nowrap; flex: none; }
.view { width: 38px; height: 17px; display: flex; align-items: center; justify-content: center; flex: none; }
.view.on { background: #c6c6c6; }
.zminus { width: 7px; height: 2px; background: #666; margin-left: 4px; flex: none; }
.zslider { width: 100px; height: 1px; background: #aaa; margin-left: 4px; position: relative; flex: none; }
.ztick { position: absolute; left: 50px; top: -3px; width: 1px; height: 7px; background: #aaa; }
.zthumb { position: absolute; left: 33px; top: -6px; width: 4px; height: 12px; background: #666; }
.zplus { width: 8px; height: 2px; background: #666; margin-left: 4px; position: relative; flex: none; }
.zplus::after { content: ""; position: absolute; left: 3px; top: -3px; width: 2px; height: 8px; background: #666; }
.zoomval { margin-left: 16px; font-size: 12.5px; }

/* watermark */
.watermark { position: absolute; left: 1592px; top: 984px; display: flex; gap: 0; pointer-events: none; }
.wm-logo { flex: none; }
.wm-text { display: flex; flex-direction: column; }
.wm-text b { font-size: 21px; line-height: 26px; color: #4f8fd0; font-weight: 700; white-space: nowrap; opacity: .92; }
.wm-text span { font-family: "Noto Sans", sans-serif; font-size: 17px; line-height: 18px; color: #72c585; white-space: nowrap; }
```
